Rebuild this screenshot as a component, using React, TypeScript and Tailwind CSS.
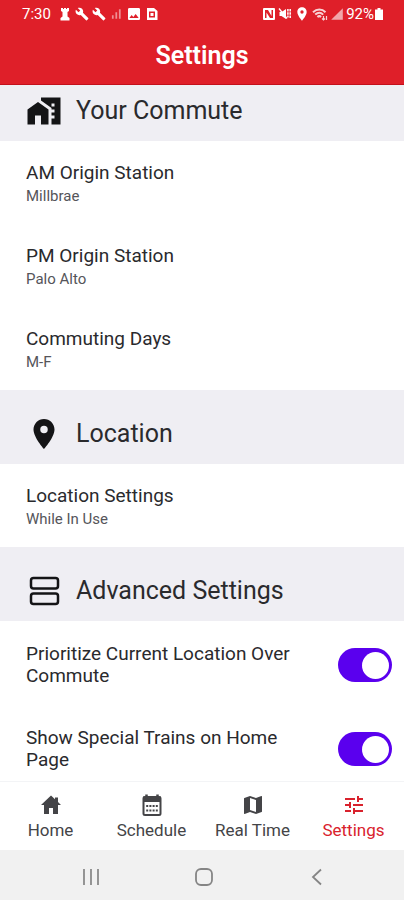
import { useState, type ReactNode } from 'react'
import {
  MdBuild,
  MdHomeWork,
  MdImage,
  MdLocationOn,
  MdMap,
  MdSignalCellular4Bar,
  MdSignalCellularAlt,
  MdTune,
} from 'react-icons/md'

// Status bar glyphs
function BeaconIcon() {
  return (
    <svg viewBox="0 0 14 14" className="size-3.5" fill="currentColor">
      <path d="M3 1h2v1h1V1h2v1h1V1h2v3l-1.500 1v4.500L11.500 11v2.500h-9V11l2-1.500V5L3 4z" />
    </svg>
  )
}

function SimIcon() {
  return (
    <svg viewBox="0 0 14 14" className="size-3.5" fill="currentColor" fillRule="evenodd">
      <path d="M2 1h7l3.500 3v9H2zM4 4.500v6h6v-6zM5.500 6h3v3h-3z" />
    </svg>
  )
}

function NfcIcon() {
  return (
    <svg viewBox="0 0 14 14" className="size-3.5" fill="currentColor" fillRule="evenodd">
      <path d="M2 1h10a1 1 0 0 1 1 1v10a1 1 0 0 1-1 1H2a1 1 0 0 1-1-1V2a1 1 0 0 1 1-1zM3 3v8h1.500V5.500L8 11h3V3H9.500v6L6 3z" />
    </svg>
  )
}

function MutedVibrateIcon() {
  return (
    <svg viewBox="0 0 14 14" className="size-3.5" fill="none" stroke="currentColor">
      <path d="M1.500 5h2L8 2v10L3.500 9h-2z" fill="currentColor" stroke="none" />
      <path d="M1 1.500l8 10" strokeWidth="1.300" />
      <path d="M9.900 2v8.500M12.200 2v10" strokeWidth="1.500" strokeDasharray="2.500 .8" />
    </svg>
  )
}

function WifiIcon() {
  return (
    <svg viewBox="0 0 16 14" className="h-3.5 w-4 opacity-80" fill="none" stroke="currentColor">
      <path d="M1 5.200c3.800-3.500 9-3.500 12.500 0M3.200 7.600c2.500-2.300 5.700-2.300 8 0M5.400 9.900c1.200-1 2.600-1 3.700 0" strokeWidth="2" />
      <path d="M11.500 9v4M10 11.500l1.500 1.500 1.500-1.500M14.500 13V9" strokeWidth="1.200" />
    </svg>
  )
}

function BatteryIcon() {
  return (
    <svg viewBox="0 0 10 14" className="h-3.5 w-2.5" fill="currentColor">
      <path d="M3.500 1h3v1.500H9V13H1V2.500h2.500z" />
    </svg>
  )
}

function AdvancedIcon() {
  return (
    <svg viewBox="0 0 36 36" className="size-9" fill="none" stroke="currentColor" strokeWidth="2.500">
      <rect x="5" y="5" width="27" height="10.500" rx="2.500" />
      <rect x="5" y="20.500" width="27" height="10.500" rx="2.500" />
    </svg>
  )
}

// Tab bar glyphs
function HomeIcon() {
  return (
    <svg viewBox="0 0 24 24" className="size-6" fill="currentColor">
      <path d="M12 2.500L2 12h3v9h5v-6h4v6h5v-9h3l-3-2.900V4.500h-3v1.800z" />
    </svg>
  )
}

function CalendarIcon() {
  return (
    <svg viewBox="0 0 24 24" className="size-6" fill="none" stroke="currentColor">
      <rect x="3.500" y="4" width="17" height="18" rx="1.500" strokeWidth="2" />
      <path d="M3 3.500h18V9H3z" fill="currentColor" stroke="none" />
      <path d="M6.500 1.500v4M17.500 1.500v4" strokeWidth="2.500" />
      <path d="M6.200 13h12M6.200 17.500h12" strokeWidth="2" strokeDasharray="2 1.200" />
    </svg>
  )
}

const tabs = [
  { label: 'Home', icon: <HomeIcon /> },
  { label: 'Schedule', icon: <CalendarIcon /> },
  { label: 'Real Time', icon: <MdMap className="size-6" /> },
  { label: 'Settings', icon: <MdTune className="size-6" /> },
]

function SectionHeader({ icon, title, first }: { icon: ReactNode; title: string; first?: boolean }) {
  return (
    <div className={`flex items-center gap-3.5 bg-[#efeef3] px-[26px] pb-3 ${first ? 'pt-2' : 'pt-[26px]'}`}>
      <span className="flex size-9 items-center justify-center text-[#141416]">{icon}</span>
      <h2 className="text-[25px] leading-9">{title}</h2>
    </div>
  )
}

function SettingRow({ title, value }: { title: string; value: string }) {
  return (
    <button type="button" className="block w-full px-[26px] pt-5 pb-[17px] text-left">
      <span className="block text-[19px] leading-6">{title}</span>
      <span className="block text-[15px] leading-[22px] text-[#55555a]">{value}</span>
    </button>
  )
}

function ToggleRow({ title }: { title: string }) {
  const [on, setOn] = useState(true)

  return (
    <label className="flex items-center justify-between gap-8 pt-[22px] pr-3 pb-[18px] pl-[26px]">
      <span className="text-[19px] leading-[22px]">{title}</span>
      <input
        type="checkbox"
        role="switch"
        checked={on}
        onChange={(e) => setOn(e.target.checked)}
        className="flex h-[34px] w-[54px] shrink-0 appearance-none items-center rounded-full bg-gray-400 px-[3px] before:size-[27px] before:rounded-full before:bg-white checked:justify-end checked:bg-[#5a00ee]"
      />
    </label>
  )
}

export default function App() {
  const [active, setActive] = useState('Settings')

  return (
    <div className="flex h-screen flex-col bg-white font-['Roboto',sans-serif] text-[#2a2a2d]">
      <header className="border-b border-[#c3101b] bg-[#df1f29] text-white">
        <div className="flex h-7 items-center justify-between pr-5 pl-[22px] text-[15px]">
          <div className="flex items-center gap-[3px]">
            <span className="mr-1">7:30</span>
            <BeaconIcon />
            <MdBuild className="size-3.5" />
            <MdBuild className="size-3.5" />
            <MdSignalCellularAlt className="size-3.5 opacity-50" />
            <MdImage className="size-4" />
            <SimIcon />
          </div>
          <div className="flex items-center gap-0.5">
            <NfcIcon />
            <MutedVibrateIcon />
            <MdLocationOn className="size-4" />
            <WifiIcon />
            <MdSignalCellular4Bar className="size-3.5 opacity-60" />
            <div className="flex items-center">
              <span>92%</span>
              <BatteryIcon />
            </div>
          </div>
        </div>
        <h1 className="text-center text-[25px] leading-[56px] font-semibold">Settings</h1>
      </header>

      <main className="min-h-0 flex-1 overflow-y-auto [scrollbar-width:none]">
        <SectionHeader first icon={<MdHomeWork className="size-9" />} title="Your Commute" />
        <SettingRow title="AM Origin Station" value="Millbrae" />
        <SettingRow title="PM Origin Station" value="Palo Alto" />
        <SettingRow title="Commuting Days" value="M-F" />

        <SectionHeader icon={<MdLocationOn className="size-9" />} title="Location" />
        <SettingRow title="Location Settings" value="While In Use" />

        <SectionHeader icon={<AdvancedIcon />} title="Advanced Settings" />
        <ToggleRow title="Prioritize Current Location Over Commute" />
        <ToggleRow title="Show Special Trains on Home Page" />
      </main>

      <nav className="grid grid-cols-4 border-t border-gray-100 bg-white pt-[11px] pb-[10px]">
        {tabs.map(({ label, icon }) => (
          <button
            key={label}
            type="button"
            onClick={() => setActive(label)}
            className={`flex flex-col items-center gap-[3px] ${active === label ? 'text-[#d9222d]' : 'text-[#444447]'}`}
          >
            {icon}
            <span className="text-[17px] leading-5">{label}</span>
          </button>
        ))}
      </nav>

      {/* Android system buttons */}
      <div className="flex h-[50px] items-center justify-center bg-[#f1f1f1] pt-1 pl-1 text-[#858585]">
        <button type="button" aria-label="Recent apps" className="flex w-[113px] justify-center">
          <svg viewBox="0 0 20 20" className="size-5" stroke="currentColor" strokeWidth="1.700">
            <path d="M3 2v16M10 2v16M17 2v16" />
          </svg>
        </button>
        <button type="button" aria-label="Home screen" className="flex w-[113px] justify-center">
          <svg viewBox="0 0 20 20" className="size-5" fill="none" stroke="currentColor" strokeWidth="1.800">
            <rect x="2" y="2" width="16" height="16" rx="5" />
          </svg>
        </button>
        <button type="button" aria-label="Back" className="flex w-[113px] justify-center">
          <svg viewBox="0 0 20 20" className="size-5" fill="none" stroke="currentColor" strokeWidth="1.800">
            <path d="M14 2.500L6 10l8 7.500" />
          </svg>
        </button>
      </div>
    </div>
  )
}
